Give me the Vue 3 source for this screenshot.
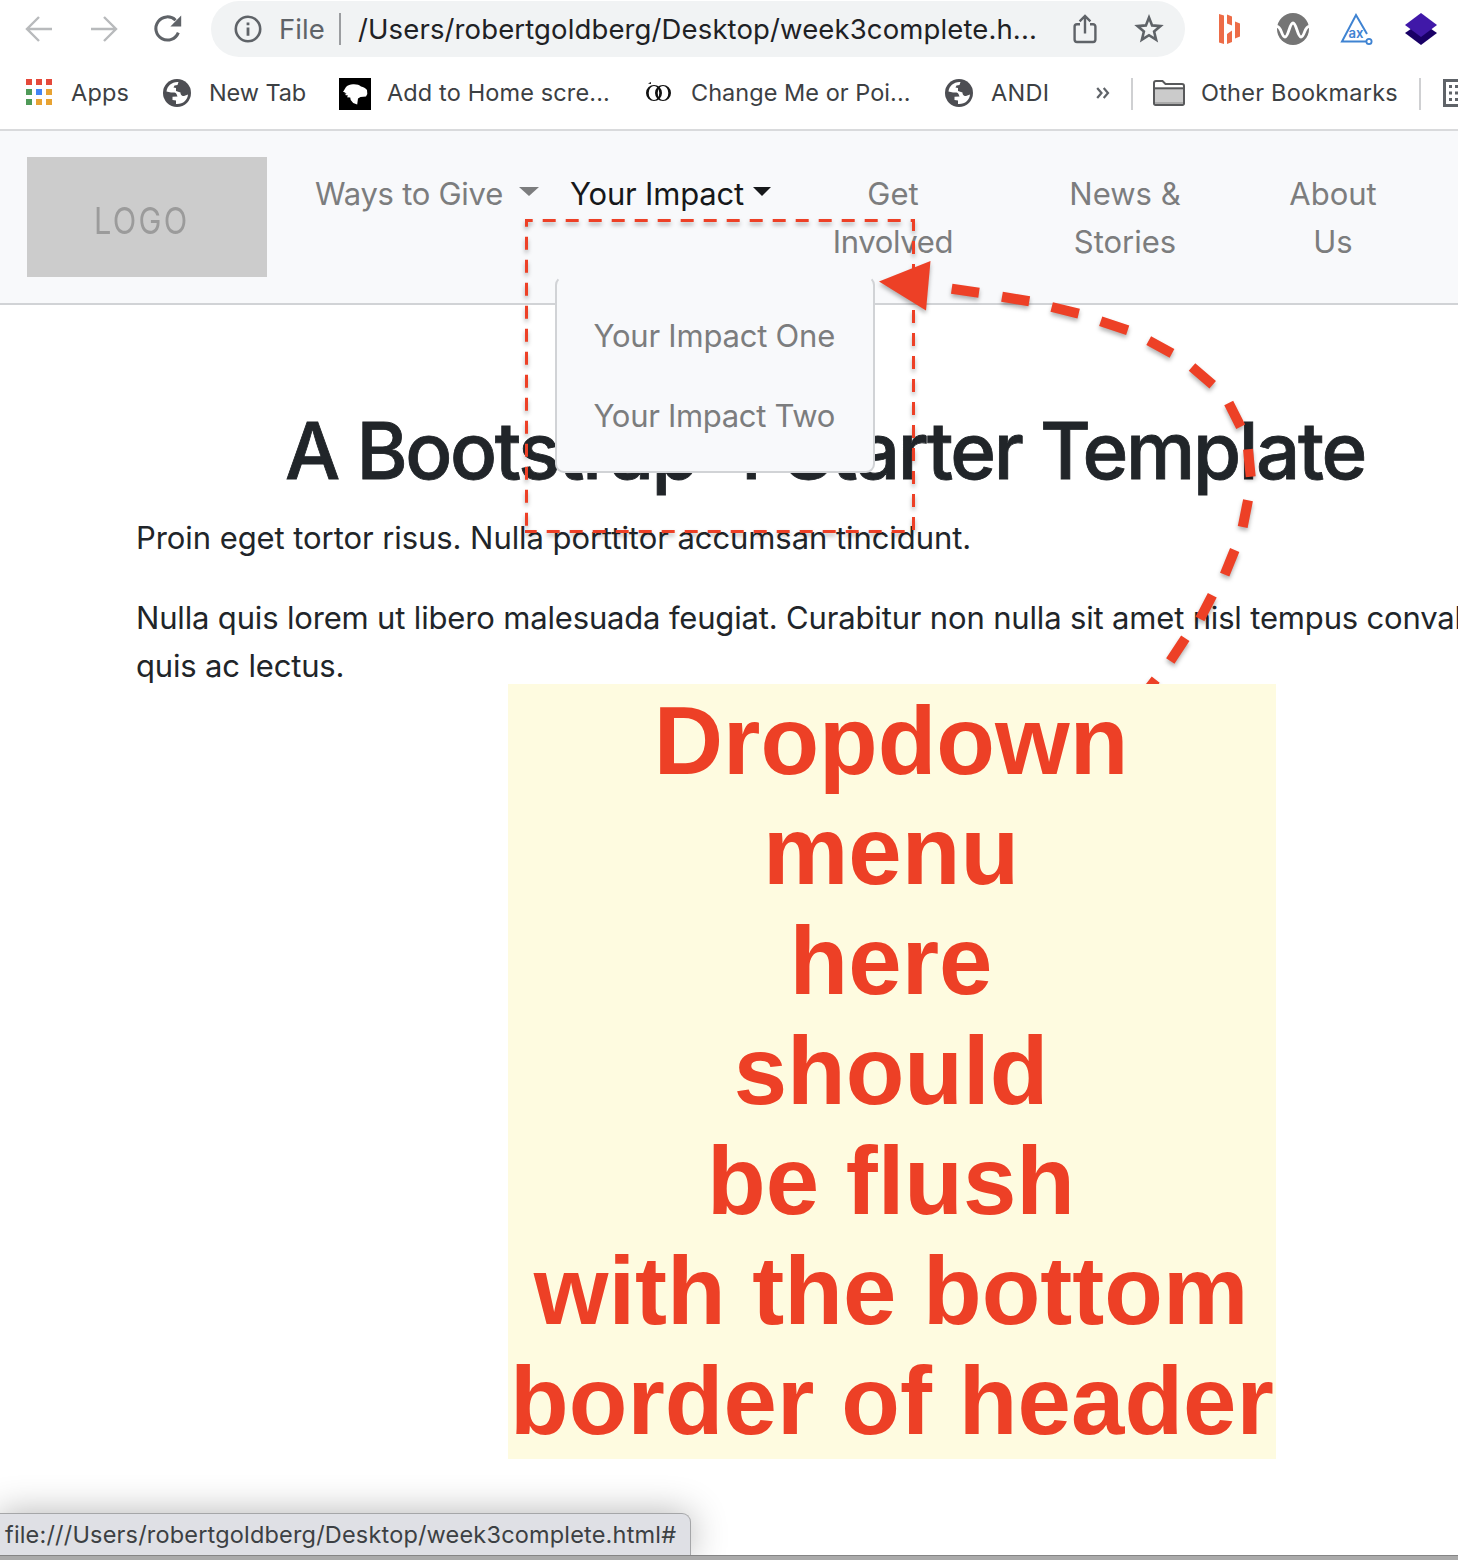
<script setup>
// Dashes of the callout arrow, from its head to its tail: x1, y1, x2, y2
const segments = [
  [951.7, 288.8, 979, 292.8],
  [1002, 296.7, 1029.3, 301.3],
  [1051.7, 307, 1078.7, 313.7],
  [1100.7, 321.3, 1127.7, 330.3],
  [1148.7, 340.7, 1172, 353.3],
  [1192, 367, 1212.7, 384.7],
  [1228.7, 403, 1240.7, 426.7],
  [1248, 449.3, 1250.7, 476.7],
  [1248, 500.3, 1242.7, 527],
  [1234.7, 550, 1224.7, 574.7],
  [1212.3, 595.3, 1200, 619],
  [1185.3, 638.3, 1170.3, 661],
  [1155.7, 679.6, 1140, 700],
]
const curve = segments.map(([a, b, c, d]) => `M${a} ${b}L${c} ${d}`).join('')
const appColors = ['#e5493a', '#e5493a', '#e5493a', '#4f9a58', '#4285f4', '#e8a333', '#4f9a58', '#e8a333', '#e8a333']
const note = ['Dropdown', 'menu', 'here', 'should', 'be flush', 'with the bottom', 'border of header']
const globe = 'M15.500 3C9 2.500 4 7 3.500 12.500L8 13.500c3 0 4.500-.500 5.500 1.500l1 2.500-5 .300v3.200l3.500.500V25c7 .500 11.500-4 12-9.500l-4 1.500c-3 0-3.500-2-3.500-3.500l-4.500-1.500v-3l-2.500-.500 1-2 3-.500z'
</script>

<template>
  <div class="window">
    <div class="toolbar">
      <svg class="back" width="28" height="28" viewBox="0 0 28 28"><path d="M27 14H2M14 2L2 14l12 12" /></svg>
      <svg class="forward" width="28" height="28" viewBox="0 0 28 28"><path d="M1 14h25M14 2l12 12-12 12" /></svg>
      <svg class="reload" width="30" height="30" viewBox="0 0 30 30">
        <path d="M25.3 18.6A11.6 11.6 0 1 1 22.6 6.2" fill="none" stroke="#5f6368" stroke-width="3" />
        <path d="M28.2 1.6v10.8H17.4z" fill="#5f6368" />
      </svg>
      <div class="omnibox">
        <svg class="info" width="28" height="28" viewBox="0 0 28 28">
          <circle cx="14" cy="14" r="12.2" fill="none" stroke="#5f6368" stroke-width="2.6" />
          <path d="M12.6 7.4h2.8v2.8h-2.8zM12.6 12.4h2.8v8.4h-2.8z" fill="#5f6368" />
        </svg>
        <span class="scheme">File</span>
        <i class="pipe"></i>
        <span class="url">/Users/robertgoldberg/Desktop/week3complete.h...</span>
        <svg class="share" width="24" height="30" viewBox="0 0 24 30">
          <path d="M7 10.2H4a2.4 2.4 0 0 0-2.4 2.4v13a2.4 2.4 0 0 0 2.4 2.4h16a2.4 2.4 0 0 0 2.4-2.4v-13a2.4 2.4 0 0 0-2.4-2.4h-3M12 19.5V2.5M6.6 7.4L12 2l5.4 5.4" fill="none" stroke="#5f6368" stroke-width="2.4" />
        </svg>
        <svg class="star" width="30" height="30" viewBox="0 0 30 30">
          <path d="M15 3.600l3.100 7.800 8.400.7-6.400 5.400 2 8.200-7.100-4.500-7.100 4.500 2-8.200-6.400-5.400 8.400-.7z" fill="none" stroke="#5f6368" stroke-width="2.6" />
        </svg>
      </div>
      <svg class="e1" width="22" height="32" viewBox="0 0 22 32" fill="#ed6c47">
        <path d="M1 1l5 1.500v28.500L1 29.500zM9 1.500l5 2v9L9 10.500zM9 21l5-3.500v11.500L9 31zM17 8.500l5 2v13l-5 2z" />
      </svg>
      <svg class="e2" width="32" height="32" viewBox="0 0 32 32">
        <circle cx="16" cy="16" r="16" fill="#757575" />
        <path d="M0 13.500C4.500 13.500 4.500 24 8 24s4.500-14 8-14 4.500 14 8 14 3.500-10.500 8-10.500" fill="none" stroke="#fff" stroke-width="2.800" />
      </svg>
      <svg class="e3" width="34" height="34" viewBox="0 0 34 34">
        <path d="M27 22L16 3 2 29.500h24" fill="none" stroke="#3f83d2" stroke-width="2" />
        <circle cx="29" cy="29.500" r="2.600" fill="none" stroke="#3f83d2" stroke-width="1.800" />
        <text x="8.500" y="26" font-size="13" font-weight="600" fill="#3f83d2" font-family="Inter, sans-serif" textLength="15" lengthAdjust="spacingAndGlyphs">ax</text>
      </svg>
      <svg class="e4" width="32" height="32" viewBox="0 0 32 32">
        <path d="M0 20l16-11 16 11-16 12z" fill="#190066" />
        <path d="M0 12L16 0l16 12-16 12z" fill="#4018a8" />
      </svg>
    </div>

    <div class="bookmarks">
      <span class="apps-grid"><i v-for="(c, i) in appColors" :key="i" :style="{ background: c }"></i></span>
      <span class="label l1">Apps</span>
      <svg class="g1" width="28" height="28" viewBox="0 0 28 28">
        <circle cx="14" cy="14" r="14" fill="#4d4e53" /><path :d="globe" fill="#fff" />
      </svg>
      <span class="label l2">New Tab</span>
      <svg class="dog" width="32" height="32" viewBox="0 0 32 32">
        <path d="M0 0h32v32H0z" />
        <path d="M4 14l3-5c2-2 5-3 8-2.700 3 0 5.500.700 7 2.200 2.500.500 4.500 1.500 6 3.500l.300 4-1.300 2.500-5.500.500-2.500 1.500-.800 6-4-1.500-2.500-3-.500-2.500-3.200-.300 1-1.700-3-.500 1.500-1.500-2.500-.500 1.500-1z" fill="#fff" />
      </svg>
      <span class="label l3">Add to Home scre...</span>
      <svg class="rings" width="28" height="22" viewBox="0 0 28 22" fill="#111" fill-rule="evenodd">
        <path d="M2 11a8 8 0 0 1 16 0 8 8 0 0 1-16 0zM4.700 11a5.300 7 0 0 0 10.600 0 5.300 7 0 0 0-10.600 0z" />
        <path d="M11 11a8 8 0 0 1 16 0 8 8 0 0 1-16 0zM13.700 11a5.300 7 0 0 0 10.600 0 5.300 7 0 0 0-10.600 0z" />
        <path d="M4 1.500l3-1.500v2z" />
      </svg>
      <span class="label l4">Change Me or Poi...</span>
      <svg class="g2" width="28" height="28" viewBox="0 0 28 28">
        <circle cx="14" cy="14" r="14" fill="#4d4e53" /><path :d="globe" fill="#fff" />
      </svg>
      <span class="label l5">ANDI</span>
      <svg class="more" width="14" height="12" viewBox="0 0 14 12"><path d="M1.200 1l4.300 5-4.300 5M7.700 1l4.300 5-4.300 5" fill="none" stroke="#5f6368" stroke-width="2.200" /></svg>
      <i class="sep s1"></i>
      <svg class="folder" width="32" height="26" viewBox="0 0 32 26">
        <path d="M1 23.500V3a2 2 0 0 1 2-2h6.500l3 3H29a2 2 0 0 1 2 2v17.500a1.500 1.500 0 0 1-1.500 1.500h-27A1.500 1.500 0 0 1 1 23.500z" fill="#fff" stroke="#58595b" stroke-width="2" />
        <path d="M2 9h28v15H2z" fill="#cbcbcb" /><path d="M2 22h28v2H2z" fill="#aaa" /><path d="M1 8.300h30" stroke="#58595b" stroke-width="2" />
      </svg>
      <span class="label l6">Other Bookmarks</span>
      <i class="sep s2"></i>
      <svg class="list" width="15" height="28" viewBox="0 0 15 28">
        <path d="M20 1.500H1.500v25H20" fill="#fff" stroke="#5f6368" stroke-width="3" />
        <path d="M6 6h3v3H6zM12 6h3v3h-3zM6 12.500h3v3H6zM12 12.500h3v3h-3zM6 19h3v3H6zM12 19h3v3h-3z" fill="#5f6368" />
      </svg>
    </div>

    <header class="site-header">
      <div class="logo"><span>LOGO</span></div>
      <nav>
        <a class="ways"><span>Ways to Give</span><i class="caret wide"></i></a>
        <a class="impact"><span>Your Impact</span><i class="caret"></i></a>
        <a class="get">Get<br><span class="involved">Involved</span></a>
        <a class="news">News &amp;<br>Stories</a>
        <a class="about">About<br>Us</a>
      </nav>
      <div class="menu">
        <a>Your Impact One</a>
        <a class="two">Your Impact Two</a>
      </div>
    </header>

    <main>
      <h1>A Bootstrap 4 Starter Template</h1>
      <p class="lead">Proin eget tortor risus. Nulla porttitor accumsan tincidunt.</p>
      <p>Nulla quis lorem ut libero malesuada feugiat. Curabitur non nulla sit amet nisl tempus convallis<br>quis ac lectus.</p>
    </main>

    <svg class="markup" width="1458" height="720" viewBox="0 0 1458 720" fill="none" stroke="#ed4026">
      <g stroke-width="3">
        <path d="M525 220.500h390" stroke-dasharray="13 10" stroke-dashoffset="5.300" />
        <path d="M913.500 219v313" stroke-dasharray="13 10" stroke-dashoffset="1" />
        <path d="M526.500 219v308" stroke-dasharray="13 10" stroke-dashoffset="5.300" />
        <path d="M525 531.500h381" stroke-dasharray="13 10" stroke-dashoffset="1.300" />
      </g>
      <path :d="curve" stroke-width="10" />
      <path d="M879 281.500L930.500 261l-4.500 49.500z" fill="#ed4026" stroke="none" />
    </svg>

    <div class="note"><div v-for="line in note" :key="line">{{ line }}</div></div>

    <div class="status">file:///Users/robertgoldberg/Desktop/week3complete.html#</div>
    <div class="bottom-edge"></div>
  </div>
</template>

<style>
body { margin: 0; background: #fff; }
</style>

<style scoped>
.window { position: relative; width: 1458px; height: 1560px; overflow: hidden; background: #fff; font-family: Inter, "Liberation Sans", sans-serif; }
svg { display: block; flex: none; }
.toolbar, .bookmarks, .omnibox { display: flex; align-items: center; white-space: nowrap; }
.toolbar { height: 58px; padding-left: 25px; }
.back, .forward { fill: none; stroke: #b8babc; stroke-width: 2.4; }
.forward { margin-left: 37px; }
.reload { margin-left: 35px; }
.omnibox { width: 974px; height: 56px; margin-left: 28px; border-radius: 28px; background: #f1f3f4; font-size: 27.5px; line-height: 56px; box-sizing: border-box; padding-left: 23px; flex: none; }
.scheme { width: 47px; margin-left: 17px; color: #5f6368; letter-spacing: .1px; }
.pipe { width: 2px; height: 32px; margin-left: 13px; background: #9b9da0; }
.url { width: 681px; margin-left: 17px; color: #202124; letter-spacing: .125px; }
.share { margin-left: 34px; }
.star { margin-left: 37px; }
.e1 { margin-left: 33px; }
.e2 { margin-left: 37px; }
.e3 { margin-left: 31px; }
.e4 { margin-left: 31px; }
.bookmarks { height: 71px; border-bottom: 2px solid #d9dadc; font-size: 23.5px; color: #3c4043; }
.label { flex: none; margin-bottom: 3px; }
.apps-grid { display: grid; grid-template-columns: repeat(3, 6px); gap: 4px; margin: 0 0 3px 26px; flex: none; }
.apps-grid i { height: 6px; }
.l1 { width: 59px; margin-left: 19px; letter-spacing: .2px; }
.g1, .g2 { margin-bottom: 2px; }
.g1 { margin-left: 33px; }
.l2 { width: 98px; margin-left: 18px; letter-spacing: -.1px; }
.dog { margin-left: 32px; }
.l3 { width: 223px; margin-left: 16px; letter-spacing: .13px; }
.rings { margin-left: 34px; margin-bottom: 2px; }
.l4 { width: 220px; margin-left: 19px; letter-spacing: .03px; }
.g2 { margin-left: 34px; }
.l5 { width: 60px; margin-left: 18px; letter-spacing: .3px; }
.more { margin-left: 45px; margin-bottom: 2px; }
.sep { width: 2px; height: 32px; background: #cfd0d2; flex: none; }
.s1 { margin-left: 21px; }
.folder { margin-left: 20px; margin-bottom: 2px; }
.l6 { width: 198px; margin-left: 16px; letter-spacing: .23px; }
.s2 { margin-left: 20px; }
.list { margin-left: 22px; margin-bottom: 2px; }
.site-header { position: relative; display: flex; height: 172px; border-bottom: 2px solid #d1d3d6; background: #f8f9fb; font-size: 31px; line-height: 48px; color: #7c7d7e; }
.logo { width: 240px; height: 120px; margin: 26px 0 0 27px; background: #ccc; color: #9b9b9b; font: 400 37px/128px Inter, sans-serif; box-sizing: border-box; padding-left: 67px; }
.logo span { display: inline-block; transform: scaleX(.83); transform-origin: 0 0; letter-spacing: 2.8px; }
nav { display: flex; align-items: flex-start; padding-top: 39px; white-space: nowrap; }
nav a { text-align: center; flex: none; }
.ways, .impact { display: flex; }
.ways { width: 255px; margin-left: 48px; letter-spacing: -.26px; }
.impact { width: 200px; color: #16181a; letter-spacing: -.18px; }
.caret { width: 0; height: 0; margin: 17px 0 0 9px; border: 9px solid transparent; border-top-color: currentColor; border-bottom: 0; }
.caret.wide { margin-left: 16px; border-left-width: 10px; border-right-width: 10px; }
.get { width: 160px; margin-left: 43px; }
.involved { letter-spacing: -.35px; }
.news { width: 160px; margin-left: 72px; }
.about { width: 120px; margin-left: 68px; }
.menu { position: absolute; z-index: 2; left: 555px; top: 145px; width: 320px; height: 197px; box-sizing: border-box; padding: 34px 0 0 37px; border: 2px solid #d1d3d6; border-top-color: transparent; border-radius: 9px; background: #f8f9fb; letter-spacing: -.22px; }
.menu a { display: block; height: 80px; margin-left: -.5px; white-space: nowrap; }
.menu .two { letter-spacing: -.31px; }
main { padding: 98px 0 0 136px; color: #212529; font-size: 31px; line-height: 48px; letter-spacing: -.165px; white-space: nowrap; }
h1 { margin: 0 0 15px; padding-left: 149px; font-size: 78px; line-height: 96px; font-weight: 500; letter-spacing: -2.35px; -webkit-text-stroke: .8px #212529; }
p { margin: 0 0 32px; }
.lead { letter-spacing: -.07px; }
.markup { position: absolute; left: 0; top: 0; z-index: 3; filter: drop-shadow(0 3px 2px rgba(0, 0, 0, .3)); }
.note { position: absolute; z-index: 4; left: 508px; top: 684px; width: 768px; height: 775px; box-sizing: border-box; padding: 2px 2px 0 0; background: #fefbe0; color: #ed4026; font: 700 96px/110px "Liberation Sans", Arial, sans-serif; text-align: center; white-space: nowrap; }
.note div:last-child { letter-spacing: .08px; margin-right: -2px; }
.status { position: absolute; z-index: 2; left: -2px; bottom: 5px; width: 693px; height: 42px; box-sizing: border-box; padding-left: 6px; border: 1px solid #a5a6a8; border-bottom: 0; border-radius: 0 9px 0 0; background: #dfe0e5; box-shadow: 0 0 36px rgba(0, 0, 0, .3); color: #3c4043; font-size: 23.5px; line-height: 41px; letter-spacing: .18px; white-space: nowrap; }
.bottom-edge { position: absolute; z-index: 3; left: 0; bottom: 0; width: 100%; height: 5px; box-sizing: border-box; border-top: 1px solid #858585; background: #aaa; }
</style>
